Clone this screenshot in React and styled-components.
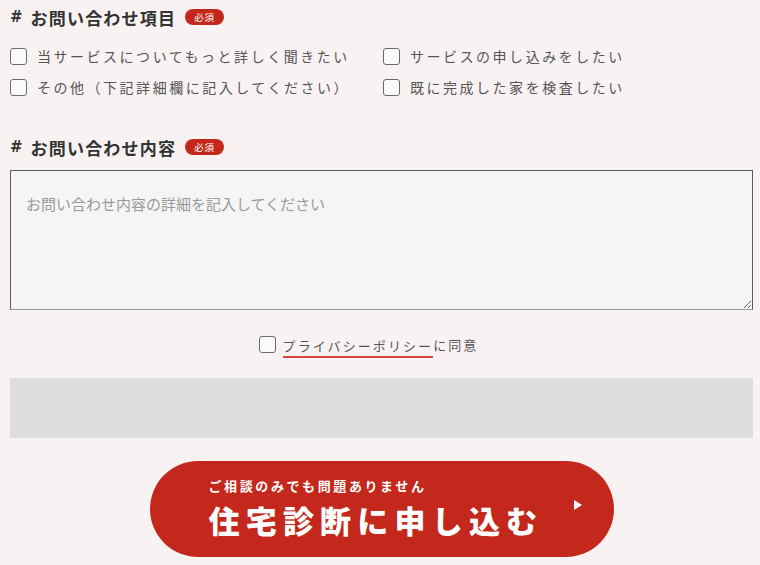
import React from "react";
import styled, { createGlobalStyle } from "styled-components";

const Global = createGlobalStyle`
  html, body { margin: 0; padding: 0; background: #f8f2f2; }
  body { font-family: "Noto Sans CJK JP", "Noto Sans", sans-serif; color: #444; }
`;

const Page = styled.div`
  width: 743px;
  padding: 5px 7px 0 10px;
  display: flex;
  flex-direction: column;
`;

const Heading = styled.div`
  display: flex;
  align-items: center;
  height: 24px;
  font-size: 17px;
  font-weight: 700;
  color: #333;
  letter-spacing: 0.07em;
  margin-top: ${(p) => p.$top || 0}px;
`;

const Hash = styled.span`
  font-family: "DejaVu Sans", sans-serif;
  font-weight: 700;
  font-size: 15px;
  margin-right: 8px;
  letter-spacing: 0;
`;

const Badge = styled.span`
  display: inline-flex;
  align-items: center;
  justify-content: center;
  margin-left: 9px;
  width: 39px;
  height: 16px;
  border-radius: 8px;
  background: #c4281c;
  color: #fff;
  font-size: 9.5px;
  font-weight: 400;
  letter-spacing: 0.08em;
`;

const Options = styled.div`
  display: grid;
  grid-template-columns: 373px auto;
  row-gap: 11px;
  margin-top: 17px;
`;

const Option = styled.label`
  display: flex;
  align-items: center;
  height: 20px;
  font-size: 14px;
  letter-spacing: 0.18em;
  color: #555;
  white-space: nowrap;
`;

const Box = styled.span`
  width: 17px;
  height: 17px;
  box-sizing: border-box;
  border: 1.5px solid #6b6b6b;
  border-radius: 3px;
  background: #fbfbfb;
  margin-right: ${(p) => p.$gap || 10}px;
  flex-shrink: 0;
`;

const TextArea = styled.textarea`
  display: block;
  box-sizing: border-box;
  width: 743px;
  height: 140px;
  margin-top: 11px;
  padding: 22px 15px;
  border: 1px solid #5a5a5a;
  border-bottom-color: #9a9a9a;
  background: #f5f5f5;
  font-family: "Noto Sans CJK JP", sans-serif;
  font-size: 15px;
  color: #444;
  resize: vertical;
  outline: none;
  &::placeholder { color: #999; }
`;

const Agree = styled.label`
  display: flex;
  justify-content: center;
  align-items: center;
  margin-top: 24px;
  padding-right: 26px;
  height: 20px;
  font-size: 13px;
  letter-spacing: 0.16em;
  color: #555;
`;

const PolicyLink = styled.span`
  border-bottom: 2px solid #d4473a;
  padding-bottom: 1px;
  margin-bottom: -5px;
`;

const Captcha = styled.div`
  margin-top: 24px;
  height: 60px;
  background: #dddddd;
`;

const Submit = styled.button`
  align-self: center;
  margin-top: 23px;
  width: 464px;
  height: 96px;
  border: none;
  border-radius: 48px;
  background: #c4281c;
  color: #fff;
  display: flex;
  align-items: center;
  justify-content: space-between;
  padding: 0 32px 0 59px;
  box-sizing: border-box;
  font-family: "Noto Sans CJK JP", sans-serif;
  cursor: pointer;
`;

const SubmitText = styled.div`
  display: flex;
  flex-direction: column;
  align-items: flex-start;
  text-align: left;
`;

const Sub = styled.span`
  font-size: 13px;
  font-weight: 700;
  letter-spacing: 0.2em;
  line-height: 18px;
`;

const Main = styled.span`
  font-size: 31px;
  font-weight: 900;
  letter-spacing: 0.2em;
  line-height: 42px;
  margin-top: 4px;
`;

const Arrow = styled.span`
  width: 0;
  height: 0;
  border-top: 5.5px solid transparent;
  border-bottom: 5.5px solid transparent;
  border-left: 8px solid #fff;
  margin-top: -8px;
`;

const options = [
  "当サービスについてもっと詳しく聞きたい",
  "サービスの申し込みをしたい",
  "その他（下記詳細欄に記入してください）",
  "既に完成した家を検査したい",
];

export default function App() {
  return (
    <>
      <Global />
      <Page>
        <Heading>
          <Hash>#</Hash>お問い合わせ項目<Badge>必須</Badge>
        </Heading>
        <Options>
          {options.map((o) => (
            <Option key={o}>
              <Box />
              {o}
            </Option>
          ))}
        </Options>
        <Heading $top={38}>
          <Hash>#</Hash>お問い合わせ内容<Badge>必須</Badge>
        </Heading>
        <TextArea placeholder="お問い合わせ内容の詳細を記入してください" />
        <Agree>
          <Box $gap={7} />
          <PolicyLink>プライバシーポリシー</PolicyLink>に同意
        </Agree>
        <Captcha />
        <Submit type="button">
          <SubmitText>
            <Sub>ご相談のみでも問題ありません</Sub>
            <Main>住宅診断に申し込む</Main>
          </SubmitText>
          <Arrow />
        </Submit>
      </Page>
    </>
  );
}
